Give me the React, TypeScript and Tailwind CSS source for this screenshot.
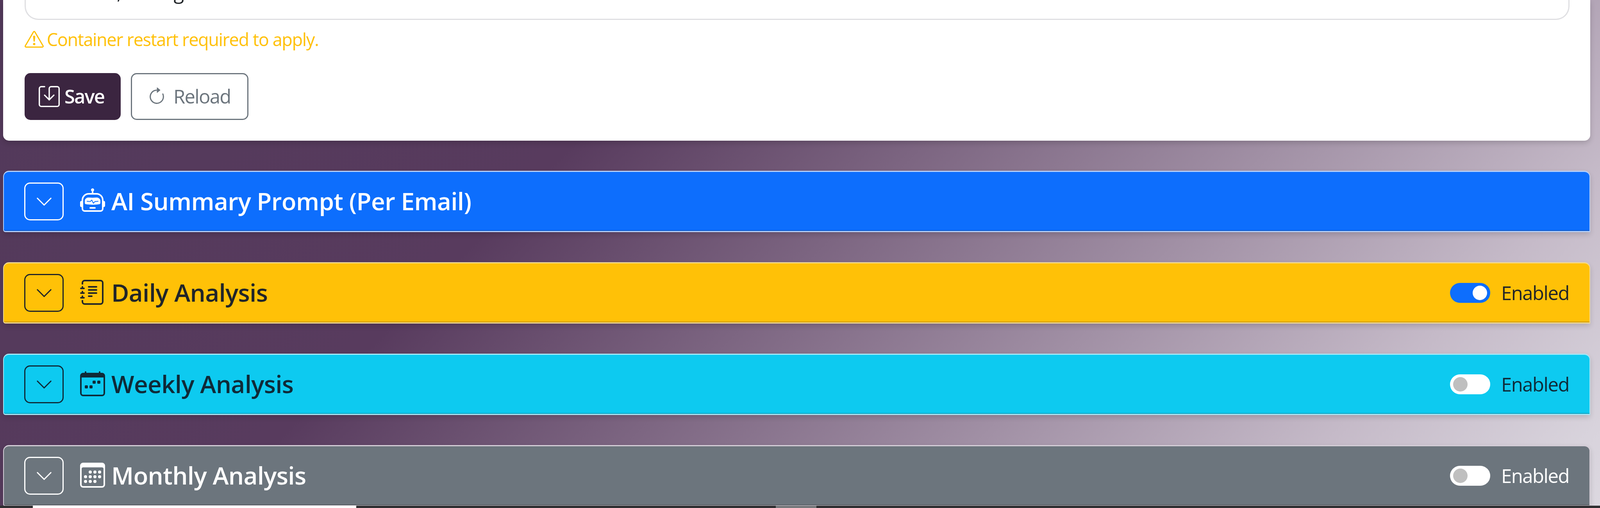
import {
  BsRobot,
  BsJournalText,
  BsCalendarWeek,
  BsCalendar3,
  BsChevronDown,
  BsSave,
  BsArrowClockwise,
  BsExclamationTriangle,
} from 'react-icons/bs';
import type { IconType } from 'react-icons';

type Section = {
  title: string;
  icon: IconType;
  head: string;
  toggle?: boolean;
};

const SECTIONS: Section[] = [
  { title: 'AI Summary Prompt (Per Email)', icon: BsRobot, head: 'bg-[#0d6efd] text-white border-[#b4cffa]' },
  { title: 'Daily Analysis', icon: BsJournalText, head: 'bg-[#ffc107] text-[#212529] border-[#f3d98f]', toggle: true },
  { title: 'Weekly Analysis', icon: BsCalendarWeek, head: 'bg-[#0dcaf0] text-[#0f2a38] border-[#a6e6f5]', toggle: false },
  { title: 'Monthly Analysis', icon: BsCalendar3, head: 'bg-[#6c757d] text-white border-[#d5ced8]', toggle: false },
];

function Toggle({ on }: { on: boolean }) {
  return (
    <span className="flex items-center gap-[28px]">
      <span
        className={`flex h-[51px] w-[103px] items-center rounded-full px-[8px] ${
          on ? 'justify-end bg-[#0d6efd]' : 'justify-start bg-white'
        }`}
      >
        <span className={`h-[37px] w-[37px] rounded-full ${on ? 'bg-white' : 'bg-[#bfbfbf]'}`} />
      </span>
      <span className="text-[49px] leading-none tracking-[-0.03em]">Enabled</span>
    </span>
  );
}

function SectionHeader({ title, icon: Icon, head, toggle }: Section) {
  return (
    <div
      className={`flex h-[157px] shrink-0 items-center justify-between rounded-t-[15px] rounded-bl-[6px] border-x-2 border-t-[3px] border-b-[3px] pr-[52px] pl-[52px] shadow-[inset_0_-2px_0_rgba(0,0,0,0.22),0_6px_14px_rgba(0,0,0,0.14)] ${head}`}
    >
      <div className="flex items-center">
        <span className="flex h-[97px] w-[101px] items-center justify-center rounded-[15px] border-[3px] border-current">
          <BsChevronDown className="h-[46px] w-[46px]" />
        </span>
        <Icon className="mb-[4px] ml-[42px] h-[64px] w-[64px]" />
        <h5 className="mb-[4px] ml-[16px] text-[62px] leading-none font-semibold tracking-[-0.011em]">{title}</h5>
      </div>
      {toggle !== undefined && <Toggle on={toggle} />}
    </div>
  );
}

export default function App() {
  return (
    <div className="flex h-screen w-full flex-col overflow-hidden bg-[linear-gradient(135deg,#52395a_0%,#583b5e_34%,#c5bac8_84%,#d8d3dc_96%,#dcd8e0_100%)] font-['Open_Sans','Noto_Sans',sans-serif]">
      <main className="flex min-h-0 flex-1 flex-col gap-[77px] overflow-hidden pr-[25px] pl-[8px]">
        <section className="flex h-[360px] shrink-0 flex-col rounded-b-[15px] bg-white pr-[53px] pl-[55px] shadow-[0_6px_14px_rgba(0,0,0,0.16)]">
          <div className="h-[51px] shrink-0 overflow-hidden rounded-b-[35px] border-x-[3px] border-b-[3px] border-[#dfdfe2] px-[37px]">
            <p className="-mt-[45px] text-[49px] leading-[49px] tracking-[-0.03em] whitespace-nowrap text-[#212529]">
              Schedule, Settings
            </p>
          </div>
          <p className="mt-[29px] flex h-[40px] items-center gap-[8px] text-[45px] leading-none tracking-[-0.03em] text-[#ffc107]">
            <BsExclamationTriangle className="h-[49px] w-[49px]" />
            Container restart required to apply.
          </p>
          <div className="mt-[67px] flex gap-[26px]">
            <button className="flex h-[120px] w-[246px] items-center gap-[12px] rounded-[15px] bg-[#3b2540] pl-[36px] text-[49px] font-semibold tracking-[-0.04em] text-white">
              <BsSave className="h-[54px] w-[54px]" />
              Save
            </button>
            <button className="flex h-[120px] w-[301px] items-center gap-[18px] rounded-[15px] border-[3px] border-[#6c757d] pl-[39px] text-[49px] tracking-[-0.035em] text-[#6c757d]">
              <BsArrowClockwise className="h-[49px] w-[49px]" />
              Reload
            </button>
          </div>
        </section>
        {SECTIONS.map((s) => (
          <SectionHeader key={s.title} {...s} />
        ))}
      </main>
      <footer className="flex h-[6px] shrink-0 bg-[#2f2f31] pl-[84px]">
        <span className="w-[828px] bg-white" />
        <span className="ml-[1074px] w-[104px] bg-[#77797c]" />
      </footer>
    </div>
  );
}
